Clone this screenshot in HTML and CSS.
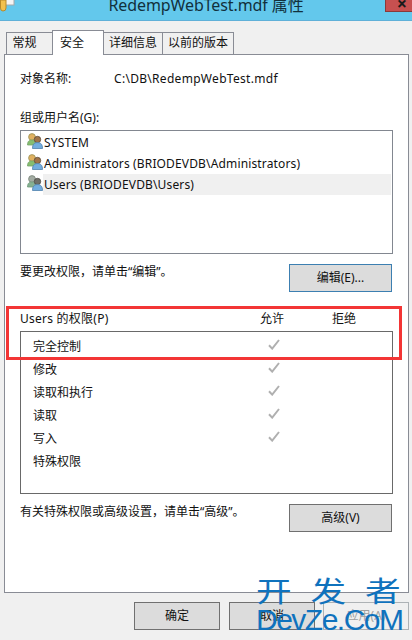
FILE: index.html
```html
<!DOCTYPE html>
<html lang="zh-CN">
<head>
  <meta charset="UTF-8" />
  <title>RedempWebTest.mdf 属性</title>
  <link rel="stylesheet" href="styles.css">
</head>
<body>
  <svg class="defs" width="0" height="0">
    <symbol id="check" viewBox="0 0 12 11">
      <path d="M1 6.2 L4.2 9.6 L11 1" fill="none" stroke="#b0b0b0" stroke-width="2"/>
    </symbol>
    <symbol id="group" viewBox="0 0 16 16">
      <circle cx="5" cy="4" r="3.4" fill="#e0b060" stroke="#98935a" stroke-width=".8"/>
      <path d="M0.5 12 C0.5 8 2.5 7 5 7 C7.5 7 9 8 9 12 Z" fill="#86bd70" stroke="#74a36a" stroke-width=".8"/>
      <circle cx="10.5" cy="6.5" r="3.2" fill="#a07448" stroke="#5c4a3a" stroke-width=".8"/>
      <path d="M5.5 15.5 C5.5 11 7.5 9.6 10.5 9.6 C13.5 9.6 15.5 11 15.5 15.5 Z" fill="#72addf" stroke="#4f82ad" stroke-width=".8"/>
    </symbol>
    <symbol id="group-gray" viewBox="0 0 16 16">
      <circle cx="5" cy="4" r="3.4" fill="#a3aca3" stroke="#7a857a" stroke-width=".8"/>
      <path d="M0.5 12 C0.5 8 2.5 7 5 7 C7.5 7 9 8 9 12 Z" fill="#86b092" stroke="#6f9a7a" stroke-width=".8"/>
      <circle cx="10.5" cy="6.5" r="3.2" fill="#6f6f68" stroke="#4c4c48" stroke-width=".8"/>
      <path d="M5.5 15.5 C5.5 11 7.5 9.6 10.5 9.6 C13.5 9.6 15.5 11 15.5 15.5 Z" fill="#72addf" stroke="#4f82ad" stroke-width=".8"/>
    </symbol>
  </svg>

  <header class="titlebar">
    <svg class="app-icon" width="15" height="12" viewBox="0 0 15 12">
      <rect x="4" y="-2" width="10" height="7" fill="#f4f4f4" stroke="#a8a8a8"/>
      <path d="M0.5 0 H6 V8 Q6 11 3 11 Q0.5 11 0.5 8 Z" fill="#f2c14e" stroke="#b98a2a"/>
    </svg>
    <span class="title">RedempWebTest.mdf 属性</span>
    <span class="close"><span class="close-x">×</span></span>
  </header>

  <nav class="tabs">
    <span class="tab tab-general">常规</span>
    <span class="tab tab-active">安全</span>
    <span class="tab tab-details">详细信息</span>
    <span class="tab tab-versions">以前的版本</span>
  </nav>

  <main class="panel">
    <div class="object-row">
      <span class="object-label">对象名称:</span>
      <span class="object-path">C:\DB\RedempWebTest.mdf</span>
    </div>

    <div class="group-label">组或用户名(G):</div>
    <ul class="user-list">
      <li class="user">
        <svg class="user-icon"><use href="#group"/></svg>
        <span class="user-name">SYSTEM</span>
      </li>
      <li class="user">
        <svg class="user-icon"><use href="#group"/></svg>
        <span class="user-name">Administrators (BRIODEVDB\Administrators)</span>
      </li>
      <li class="user">
        <svg class="user-icon"><use href="#group-gray"/></svg>
        <span class="user-name selected">Users (BRIODEVDB\Users)</span>
      </li>
    </ul>

    <div class="action-row">
      <span>要更改权限，请单击“编辑”。</span>
      <button class="btn btn-wide btn-focus">编辑(E)...</button>
    </div>

    <div class="perm-head">
      <span class="perm-title">Users 的权限(P)</span>
      <span class="perm-allow">允许</span>
      <span>拒绝</span>
    </div>
    <div class="perm-box">
      <div class="perm-row"><span>完全控制</span><svg class="check"><use href="#check"/></svg></div>
      <div class="perm-row"><span>修改</span><svg class="check"><use href="#check"/></svg></div>
      <div class="perm-row"><span>读取和执行</span><svg class="check"><use href="#check"/></svg></div>
      <div class="perm-row"><span>读取</span><svg class="check"><use href="#check"/></svg></div>
      <div class="perm-row"><span>写入</span><svg class="check"><use href="#check"/></svg></div>
      <div class="perm-row"><span>特殊权限</span></div>
    </div>

    <div class="action-row">
      <span>有关特殊权限或高级设置，请单击“高级”。</span>
      <button class="btn btn-wide">高级(V)</button>
    </div>
  </main>

  <footer class="dialog-buttons">
    <button class="btn btn-ok">确定</button>
    <button class="btn">取消</button>
    <button class="btn btn-disabled">应用(A)</button>
  </footer>

  <!-- screenshot annotation -->
  <div class="red-box"></div>

  <div class="watermark">
    <div class="wm-cn">开发者</div>
    <div class="wm-en">DevZe.CoM</div>
  </div>
</body>
</html>
```

FILE: styles.css
```css
* {
  box-sizing: border-box;
  margin: 0;
  padding: 0;
}

body {
  width: 412px;
  height: 640px;
  overflow: hidden;
  position: relative;
  background-color: #f0f0f0;
  color: #111;
  font-family: "Noto Sans", "Noto Sans CJK SC", sans-serif;
  font-size: 12px;
  line-height: 16px;
}

.defs {
  position: absolute;
}

/* Title bar */
.titlebar {
  height: 21px;
  position: relative;
  background-color: #63c8ec;
  border-bottom: 1px solid #5fb0d8;
  display: flex;
  justify-content: center;
  overflow: hidden;
}

.app-icon {
  position: absolute;
  top: 0;
  left: 0;
}

.title {
  font-size: 16px;
  line-height: 10px;
  letter-spacing: -.1px;
  color: #12303c;
  white-space: nowrap;
}

.close {
  position: absolute;
  top: 0;
  right: 0;
  width: 27px;
  height: 12px;
  padding-left: 6px;
  background-color: #c75050;
  border: 1px solid #8a3a3a;
  border-top: 0;
  border-right: 0;
  display: flex;
  justify-content: center;
  overflow: hidden;
}

.close-x {
  color: #1a1a1a;
  font-size: 18px;
  font-weight: bold;
  line-height: 6px;
}

/* Tabs */
.tabs {
  height: 33px;
  padding-left: 6px;
  display: flex;
  align-items: flex-end;
}

.tab {
  height: 22px;
  margin-right: -1px;
  border: 1px solid #898c95;
  border-bottom: 0;
  text-align: center;
  line-height: 20px;
  background-color: #f0f0f0;
}

.tab-general {
  width: 47px;
  padding-right: 10px;
}

.tab-details { width: 60px; }
.tab-versions { width: 72px; }

.tab-active {
  width: 52px;
  height: 25px;
  margin-bottom: -1px;
  padding-right: 12px;
  background-color: #fff;
  position: relative;
  line-height: 23px;
}

/* Panel */
.panel {
  width: 405px;
  height: 539px;
  margin-left: 4px;
  padding: 16px 15px 0;
  background-color: #fff;
  border: 1px solid #898c95;
}

.object-row {
  display: flex;
}

.object-label {
  width: 94px;
}

.object-path {
  letter-spacing: .3px;
}

.group-label {
  margin-top: 23px;
}

.user-list {
  height: 124px;
  margin-top: 4px;
  padding: 1px;
  border: 1px solid #828790;
  list-style: none;
}

.user {
  height: 21px;
  padding-left: 5px;
  display: flex;
}

.user-icon {
  width: 16px;
  height: 16px;
  margin-top: 1px;
  flex: none;
}

.user-name {
  flex: 1;
  height: 21px;
  padding-left: 1px;
  line-height: 21px;
  letter-spacing: .15px;
}

.selected {
  background-color: #f0f0f0;
}

.action-row {
  margin-top: 10px;
  display: flex;
  justify-content: space-between;
}

.btn {
  width: 86px;
  height: 28px;
  background-color: #dcdcdc;
  border: 1px solid #707070;
  color: #111;
  font: inherit;
}

.btn-wide {
  width: 103px;
  margin-right: 1px;
}

.btn-focus {
  border-color: #3c7fb1;
}

.btn-ok {
  margin-right: 1px;
}

.btn-disabled {
  background-color: #f0f0f0;
  border-color: #adb2b5;
  color: #a0a0a0;
}

/* Permissions */
.perm-head {
  margin-top: 19px;
  display: flex;
}

.perm-title {
  width: 240px;
  letter-spacing: .25px;
}

.perm-allow {
  width: 72px;
}

.perm-box {
  height: 163px;
  margin-top: 4px;
  padding: 3px 0 0 12px;
  border: 1px solid #696969;
}

.perm-row {
  height: 23px;
  display: flex;
  align-items: center;
}

.perm-row span {
  width: 235px;
}

.check {
  width: 12px;
  height: 11px;
  margin-bottom: 5px;
}

/* Bottom buttons */
.dialog-buttons {
  width: 409px;
  margin-top: 9px;
  display: flex;
  justify-content: flex-end;
  gap: 8px;
}

/* Overlays */
.red-box {
  position: absolute;
  top: 306px;
  left: 6px;
  width: 396px;
  height: 54px;
  border: 3px solid #f33535;
}

.watermark {
  position: absolute;
  top: 572px;
  left: 256px;
  width: 150px;
  color: #0f72bd;
}

.wm-cn {
  font-family: "Noto Sans CJK SC", sans-serif;
  font-size: 33px;
  line-height: 36px;
  letter-spacing: 17.5px;
  white-space: nowrap;
  transform-origin: left center;
  transform: scale(1.08, .86);
}

.wm-en {
  font-family: "Liberation Sans", sans-serif;
  font-size: 30px;
  line-height: 24px;
  letter-spacing: -1.5px;
  white-space: nowrap;
}
```
